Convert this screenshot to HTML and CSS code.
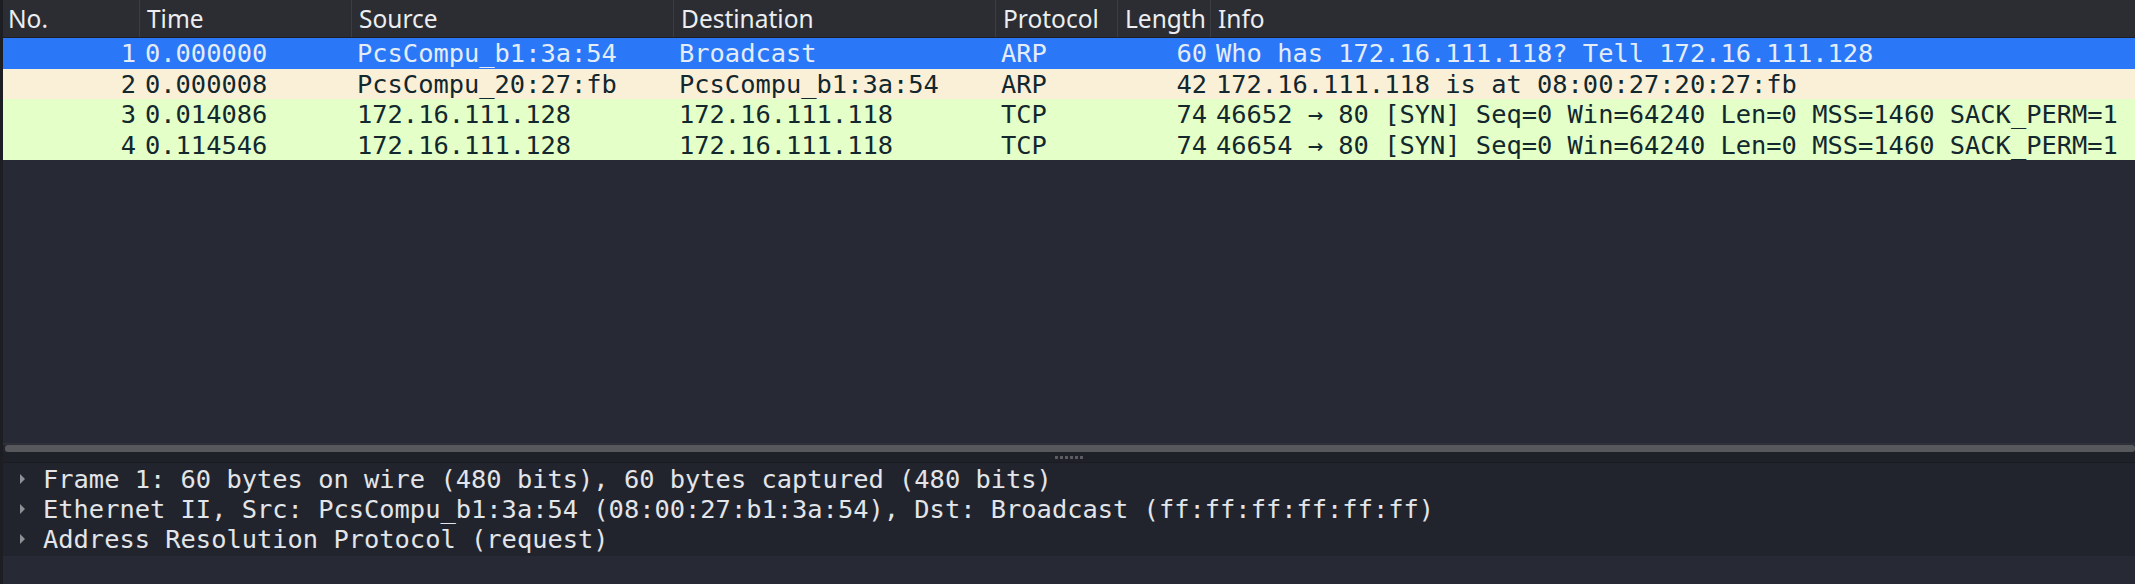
FILE: index.html
```html
<!DOCTYPE html>
<html>
<head>
<meta charset="utf-8">
<link rel="stylesheet" href="styles.css">
</head>
<body>
<div class="app">
  <div class="list">
    <div class="cols hdr">
      <div class="hc first">No.</div>
      <div class="hc">Time</div>
      <div class="hc">Source</div>
      <div class="hc">Destination</div>
      <div class="hc">Protocol</div>
      <div class="hc">Length</div>
      <div class="hc">Info</div>
    </div>
    <div class="cols row sel">
      <div class="c num">1</div>
      <div class="c">0.000000</div>
      <div class="c">PcsCompu_b1:3a:54</div>
      <div class="c">Broadcast</div>
      <div class="c">ARP</div>
      <div class="c num">60</div>
      <div class="c">Who has 172.16.111.118? Tell 172.16.111.128</div>
    </div>
    <div class="cols row arp">
      <div class="c num">2</div>
      <div class="c">0.000008</div>
      <div class="c">PcsCompu_20:27:fb</div>
      <div class="c">PcsCompu_b1:3a:54</div>
      <div class="c">ARP</div>
      <div class="c num">42</div>
      <div class="c">172.16.111.118 is at 08:00:27:20:27:fb</div>
    </div>
    <div class="cols row tcp">
      <div class="c num">3</div>
      <div class="c">0.014086</div>
      <div class="c">172.16.111.128</div>
      <div class="c">172.16.111.118</div>
      <div class="c">TCP</div>
      <div class="c num">74</div>
      <div class="c">46652 → 80 [SYN] Seq=0 Win=64240 Len=0 MSS=1460 SACK_PERM=1</div>
    </div>
    <div class="cols row tcp">
      <div class="c num">4</div>
      <div class="c">0.114546</div>
      <div class="c">172.16.111.128</div>
      <div class="c">172.16.111.118</div>
      <div class="c">TCP</div>
      <div class="c num">74</div>
      <div class="c">46654 → 80 [SYN] Seq=0 Win=64240 Len=0 MSS=1460 SACK_PERM=1</div>
    </div>
    <div class="empty"></div>
  </div>
  <div class="hscroll"><div class="thumb"></div></div>
  <div class="splitter">
    <div class="grip"><span></span><span></span><span></span><span></span><span></span><span></span></div>
  </div>
  <div class="detail">
    <div class="item"><span class="tri"></span><span class="txt">Frame 1: 60 bytes on wire (480 bits), 60 bytes captured (480 bits)</span></div>
    <div class="item"><span class="tri"></span><span class="txt">Ethernet II, Src: PcsCompu_b1:3a:54 (08:00:27:b1:3a:54), Dst: Broadcast (ff:ff:ff:ff:ff:ff)</span></div>
    <div class="item"><span class="tri"></span><span class="txt">Address Resolution Protocol (request)</span></div>
  </div>
  <div class="bottom"></div>
</div>
</body>
</html>
```

FILE: styles.css
```css
html, body {
  margin: 0;
  padding: 0;
  background: #272935;
}
.app {
  width: 2135px;
  height: 584px;
  box-sizing: border-box;
  border-left: 3px solid #1c1e23;
  display: flex;
  flex-direction: column;
  overflow: hidden;
}
.list {
  flex: 1;
  display: flex;
  flex-direction: column;
  background: #272a35;
  min-height: 0;
}
.cols {
  display: grid;
  grid-template-columns: 136px 212px 322px 322px 122px 93px 1fr;
}
.hdr {
  height: 37px;
  background: #2b2d33;
  border-bottom: 1px solid #1d1f24;
  font-family: "Noto Sans", "DejaVu Sans", sans-serif;
  font-size: 24.5px;
  color: #eceef1;
}
.hc {
  border-left: 1px solid #3a3d43;
  padding-left: 7px;
  line-height: 38px;
  white-space: nowrap;
  overflow: hidden;
}
.hc.first {
  border-left: none;
  padding-left: 5px;
}
.row {
  height: 30.6px;
  font-family: "DejaVu Sans Mono", "Liberation Mono", monospace;
  font-size: 25.4px;
  line-height: 30.6px;
  white-space: pre;
}
.c {
  padding-left: 6px;
  overflow: hidden;
}
.c.num {
  text-align: right;
  padding-left: 0;
  padding-right: 3px;
}
.sel {
  background: #2a78f8;
  color: #e4ecf8;
}
.arp {
  background: #faf0d7;
  color: #12272e;
}
.tcp {
  background: #e4ffc7;
  color: #12272e;
}
.empty {
  flex: 1;
}
.hscroll {
  height: 9px;
  box-sizing: border-box;
  background: #222430;
  border-top: 2px solid #2e303a;
  padding: 0 0 0 2px;
}
.thumb {
  height: 7px;
  background: #56585c;
  border-radius: 3px;
}
.splitter {
  height: 11px;
  box-sizing: border-box;
  background: #1f2129;
  border-bottom: 1px solid #1a1c22;
  display: flex;
  align-items: center;
  justify-content: center;
}
.grip {
  display: flex;
  gap: 2px;
}
.grip span {
  width: 3px;
  height: 3px;
  background: #5a5c62;
}
.detail {
  height: 93px;
  box-sizing: border-box;
  padding-top: 1px;
  background: #22242d;
  font-family: "DejaVu Sans Mono", "Liberation Mono", monospace;
  font-size: 25.4px;
  color: #e2e5ea;
}
.item {
  height: 30px;
  line-height: 30px;
  display: flex;
  align-items: center;
  white-space: pre;
}
.tri {
  width: 0;
  height: 0;
  margin-left: 17px;
  margin-right: 18px;
  border-top: 5px solid transparent;
  border-bottom: 5px solid transparent;
  border-left: 5px solid #8d9095;
}
.bottom {
  height: 28px;
  background: #272935;
}
```
